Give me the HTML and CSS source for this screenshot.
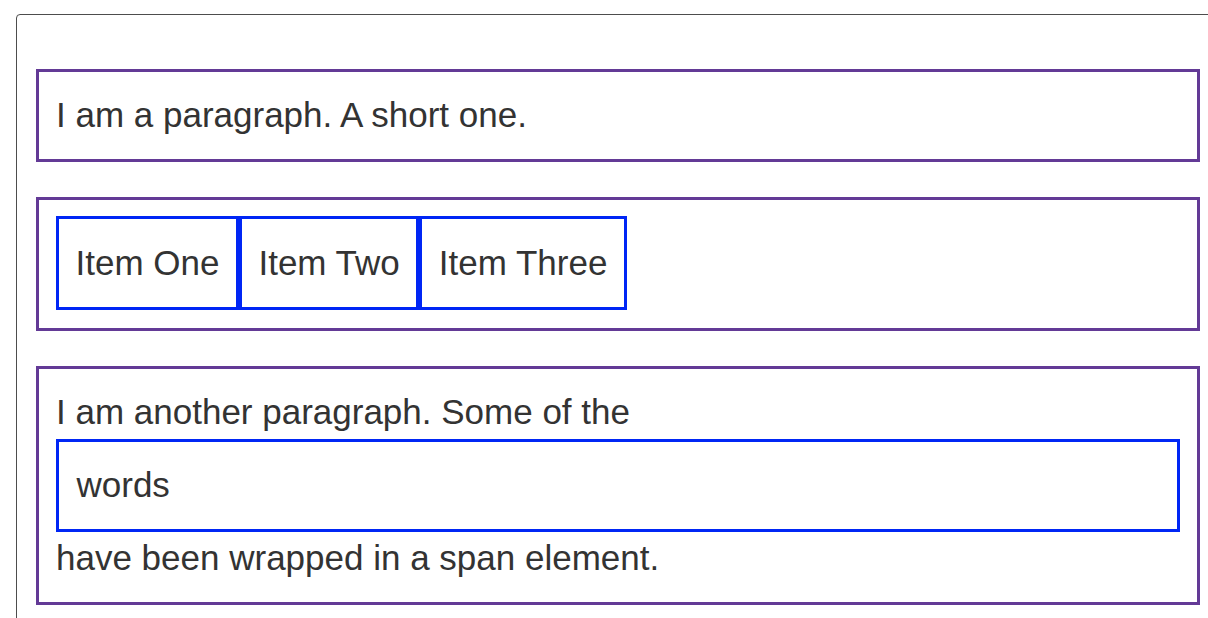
FILE: index.html
```html
<!DOCTYPE html>
<html lang="en">
<head>
<meta charset="utf-8">
<title>Display example</title>
<link rel="stylesheet" href="styles.css">
</head>
<body>
<div class="frame">
  <p class="box">I am a paragraph. A short one.</p>
  <ul class="box list">
    <li class="item">Item One</li>
    <li class="item">Item Two</li>
    <li class="item">Item Three</li>
  </ul>
  <p class="box">I am another paragraph. Some of the <span class="block">words</span> have been wrapped in a span element.</p>
</div>
</body>
</html>
```

FILE: styles.css
```css
html, body {
  margin: 0;
  padding: 0;
  overflow: hidden;
  background: #ffffff;
}

body {
  font-family: "Liberation Sans", Arial, Helvetica, sans-serif;
  font-size: 35px;
  line-height: 1.5;
  color: #333333;
}

.frame {
  margin: 14px 0 0 16px;
  width: 1164px;
  padding: 19px;
  border: 1px solid #4d4d4d;
  border-top-left-radius: 4px;
  min-height: 700px;
}

.box {
  margin: 35px 0;
  padding: 17px;
  border: 3px solid #633a96;
}

.list {
  list-style: none;
  display: flex;
  padding-top: 16.5px;
  padding-bottom: 18px;
}

.item {
  padding: 17.5px 16.5px 18px;
  border: 3px solid #0026f5;
}

.block {
  display: block;
  padding: 17.5px;
  border: 3px solid #0026f5;
}
```
